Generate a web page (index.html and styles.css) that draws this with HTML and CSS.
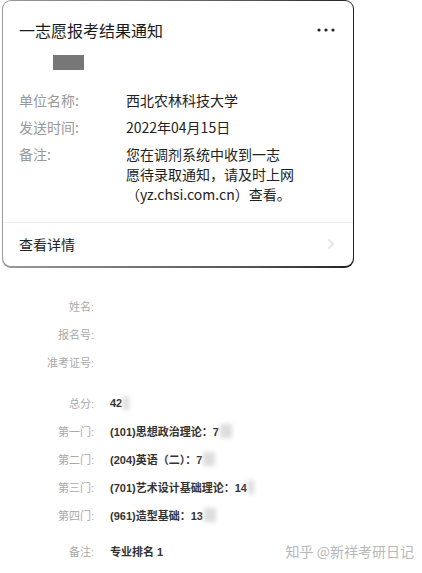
FILE: index.html
```html
<!DOCTYPE html>
<html lang="zh-CN">
<head>
    <meta charset="UTF-8">
    <meta name="viewport" content="width=device-width, initial-scale=1.0">
    <title>一志愿报考结果通知</title>
    <link rel="stylesheet" href="styles.css">
</head>
<body>

    <div class="frame">
        <div class="card">
            <div class="card-head">
                <span class="card-title">一志愿报考结果通知</span>
                <svg class="more" width="18" height="4" viewBox="0 0 18 4">
                    <circle cx="2" cy="2" r="1.6" fill="#222"/>
                    <circle cx="9" cy="2" r="1.6" fill="#222"/>
                    <circle cx="16" cy="2" r="1.6" fill="#222"/>
                </svg>
            </div>
            <div class="redact"></div>
            <div class="card-body">
                <div class="row">
                    <span class="row-label">单位名称:</span>
                    <span class="row-value">西北农林科技大学</span>
                </div>
                <div class="row">
                    <span class="row-label">发送时间:</span>
                    <span class="row-value">2022年04月15日</span>
                </div>
                <div class="row">
                    <span class="row-label">备注:</span>
                    <span class="row-value">您在调剂系统中收到一志<br>愿待录取通知，请及时上网<br>（yz.chsi.com.cn）查看。</span>
                </div>
            </div>
            <div class="card-foot">
                <span>查看详情</span>
                <svg class="chev" width="8" height="12" viewBox="0 0 8 12"><path d="M1.5 1.5 L6 6 L1.5 10.5" fill="none" stroke="#e2e2e2" stroke-width="1.6"/></svg>
            </div>
        </div>
    </div>

    <div class="scores">
        <div class="line"><span class="s-label">姓名:</span><span class="s-value"></span></div>
        <div class="line"><span class="s-label">报名号:</span><span class="s-value"></span></div>
        <div class="line"><span class="s-label">准考证号:</span><span class="s-value"></span></div>

        <div class="line gap"><span class="s-label">总分:</span><span class="s-value">42<i class="blur narrow"></i></span></div>
        <div class="line"><span class="s-label">第一门:</span><span class="s-value">(101)思想政治理论：7<i class="blur"></i></span></div>
        <div class="line"><span class="s-label">第二门:</span><span class="s-value">(204)英语（二）：7<i class="blur"></i></span></div>
        <div class="line"><span class="s-label">第三门:</span><span class="s-value">(701)艺术设计基础理论：14<i class="blur narrow"></i></span></div>
        <div class="line"><span class="s-label">第四门:</span><span class="s-value">(961)造型基础：13<i class="blur"></i></span></div>

        <div class="line last">
            <span class="s-label">备注:</span><span class="s-value">专业排名 1</span>
            <span class="mark">知乎 @新祥考研日记</span>
        </div>
    </div>

</body>
</html>
```

FILE: styles.css
```css
body {
    margin: 0;
    background-color: #fff;
    font-family: "Noto Sans CJK SC", "Noto Sans", sans-serif;
    color: #222;
}

/* notification card */
.frame {
    width: 350px;
    margin-left: 2px;
    padding: 1px 1px 2px 1px;
    background: linear-gradient(90deg, #9a9a9a, #555 70%, #222);
    border-radius: 9px;
}
.card {
    background-color: #fff;
    border-radius: 8px;
    height: 265px;
}
.card-head {
    display: flex;
    justify-content: space-between;
    align-items: center;
    padding: 17px 18px 0 16px;
    height: 24px;
}
.card-title {
    font-size: 16px;
    color: #1a1a1a;
}
.redact {
    width: 31px;
    height: 15px;
    margin: 13px 0 0 50px;
    background-color: #777;
}
.card-body {
    padding: 20px 16px 11px 16px;
    border-bottom: 1px solid #eee;
}
.row {
    display: flex;
    font-size: 14px;
    line-height: 20px;
    margin-bottom: 7px;
}
.row-label {
    width: 107px;
    color: #999;
}
.row-value {
    color: #222;
}
.card-foot {
    display: flex;
    justify-content: space-between;
    align-items: center;
    padding: 0 18px 0 16px;
    height: 42px;
    font-size: 14px;
    color: #222;
}

/* score list */
.scores {
    padding-top: 24px;
    font-family: "Liberation Sans", "Noto Sans CJK SC", sans-serif;
    font-size: 11px;
}
.line {
    display: flex;
    align-items: center;
    height: 28px;
}
.line.gap {
    margin-top: 13px;
}
.line.last {
    margin-top: 8px;
}
.s-label {
    width: 94px;
    text-align: right;
    color: #aaa;
    padding-right: 16px;
}
.s-value {
    color: #333;
    font-weight: bold;
    display: flex;
    align-items: center;
}
.blur {
    display: inline-block;
    width: 12px;
    height: 14px;
    margin-left: 1px;
    background-color: #ddd;
    filter: blur(2px);
}
.blur.narrow {
    width: 6px;
}
.mark {
    margin-left: auto;
    margin-right: 8px;
    font-size: 14px;
    color: #b8b8b8;
    font-family: "Noto Sans CJK SC", sans-serif;
}
```
